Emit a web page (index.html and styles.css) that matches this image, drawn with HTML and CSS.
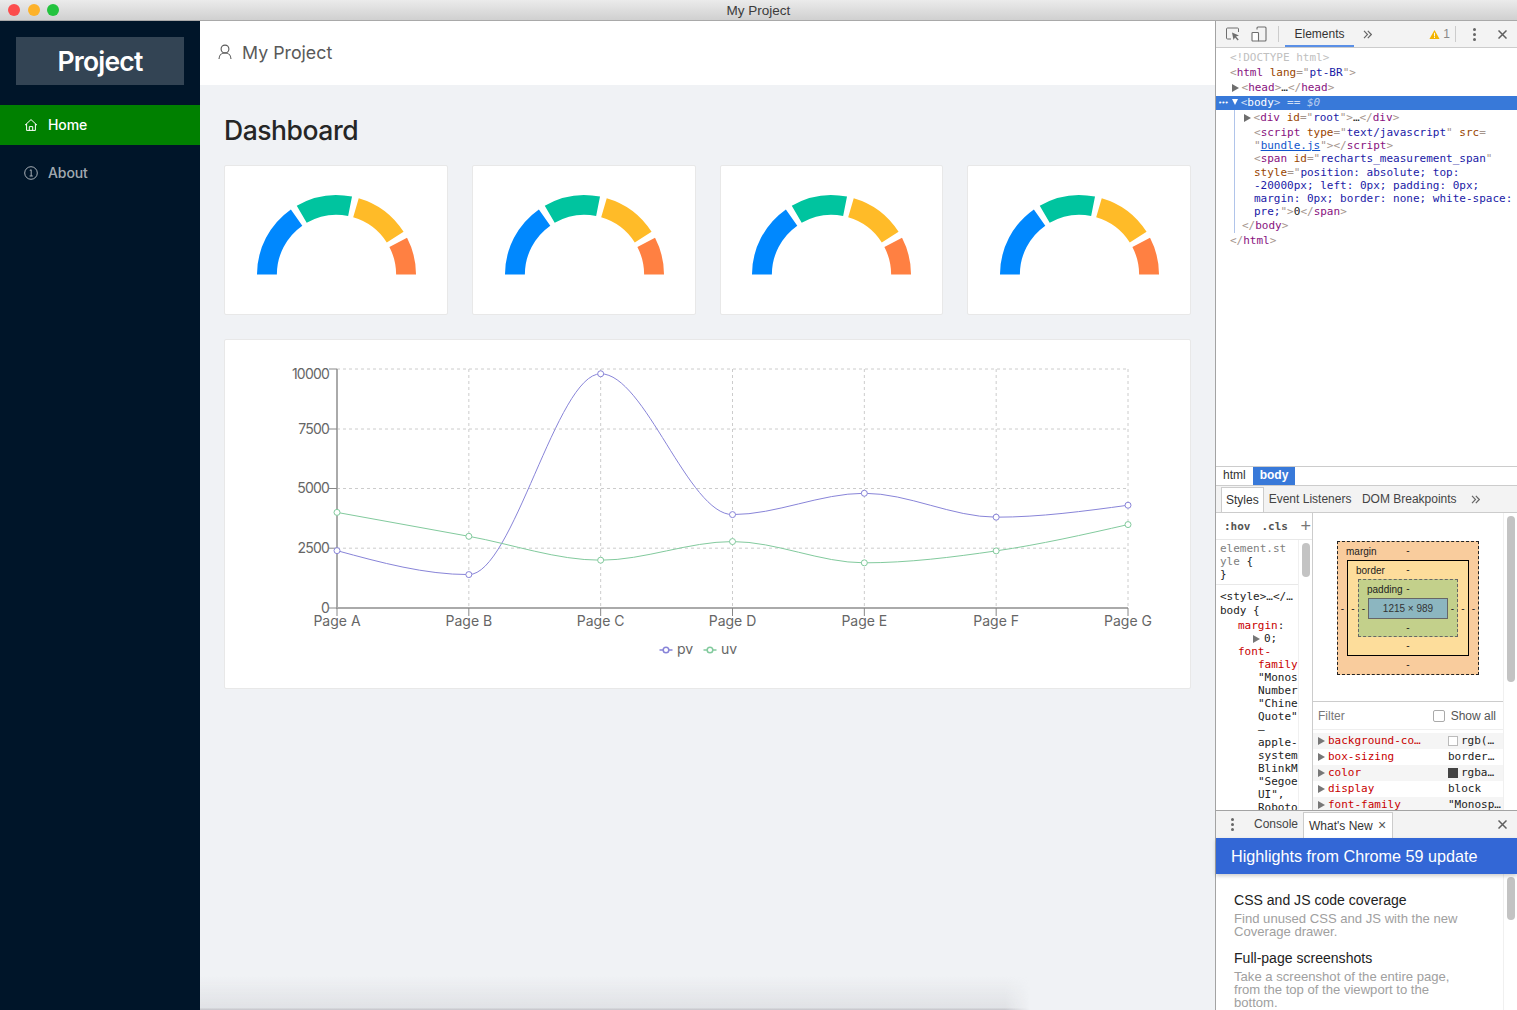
FILE: index.html
```html
<!DOCTYPE html>
<html lang="pt-BR">
<head>
<meta charset="utf-8">
<title>My Project</title>
<link rel="stylesheet" href="styles.css">
</head>
<body>
<div class="window">
  <header class="titlebar">
    <span class="light red"></span><span class="light amber"></span><span class="light green"></span>
    <span class="window-title">My Project</span>
  </header>
  <div class="workspace">
    <aside class="sidebar">
      <div class="logo">Project</div>
      <nav class="menu">
        <a class="menu-item active">
          <svg class="menu-icon" viewBox="0 0 14 14"><path d="M1 7.2 7 1.6l6 5.6M2.6 6v6.4h8.8V6M5.3 12.4V8.6h3.4v3.8" fill="none" stroke="currentColor" stroke-width="1"/></svg>
          <span class="menu-text">Home</span>
        </a>
        <a class="menu-item">
          <svg class="menu-icon" viewBox="0 0 14 14"><circle cx="7" cy="7" r="6.3" fill="none" stroke="currentColor" stroke-width="1"/><path d="M5.8 4.4 7.2 3.8v6M5.6 10h3.2" fill="none" stroke="currentColor" stroke-width="1"/></svg>
          <span class="menu-text">About</span>
        </a>
      </nav>
    </aside>
    <main class="main">
      <div class="topbar">
        <svg class="user-icon" viewBox="0 0 14 16"><circle cx="7" cy="5" r="3.9" fill="none" stroke="currentColor" stroke-width="1.1"/><path d="M1 15c0-3.600 2.500-6 6-6s6 2.400 6 6" fill="none" stroke="currentColor" stroke-width="1.1"/></svg>
        <span class="topbar-title">My Project</span>
      </div>
      <div class="content">
        <h1 class="page-title">Dashboard</h1>
        <div class="gauges">
          <div class="card gauge-card"><svg class="gauge" viewBox="-82 -82 164 84"><use href="#g"/></svg></div>
          <div class="card gauge-card"><svg class="gauge" viewBox="-82 -82 164 84"><use href="#g"/></svg></div>
          <div class="card gauge-card"><svg class="gauge" viewBox="-82 -82 164 84"><use href="#g"/></svg></div>
          <div class="card gauge-card"><svg class="gauge" viewBox="-82 -82 164 84"><use href="#g"/></svg></div>
        </div>
        <svg class="defs"><defs><g id="g">
          <path fill="#0088FE" d="M-80 0A80 80 0 0 1-45.89-65.53L-34.41-49.15A60 60 0 0 0-60 0Z"/>
          <path fill="#00C49F" d="M-40-69.28A80 80 0 0 1 15.61-78.46L11.71-58.85A60 60 0 0 0-30-51.96Z"/>
          <path fill="#FFBB28" d="M22.39-76.8A80 80 0 0 1 67.47-42.98L50.6-32.24A60 60 0 0 0 16.79-57.6Z"/>
          <path fill="#FF8042" d="M70.96-36.94A80 80 0 0 1 80 0L60 0A60 60 0 0 0 53.22-27.7Z"/>
        </g></defs></svg>
        <div class="card chart-card">
          <svg class="chart" viewBox="224 339 967 349">
            <g class="grid">
              <path d="M337 369H1128M337 429H1128M337 488.500H1128M337 548.200H1128"/>
              <path d="M468.830 369V608M600.670 369V608M732.500 369V608M864.330 369V608M996.170 369V608M1128 369V608"/>
            </g>
            <g class="axis">
              <path class="axis-line" d="M337 369V608H1128"/>
              <path d="M329 369H337M329 429H337M329 488.500H337M329 548.200H337M329 608H337M337 608V616M468.830 608V616M600.670 608V616M732.500 608V616M864.330 608V616M996.170 608V616M1128 608V616"/>
            </g>
            <g class="tick ytick">
              <text x="329" y="378.500">10000</text><text x="329" y="433.500">7500</text><text x="329" y="493">5000</text><text x="329" y="553">2500</text><text x="329" y="613">0</text>
            </g>
            <g class="tick xtick">
              <text x="337" y="626">Page A</text><text x="468.830" y="626">Page B</text><text x="600.670" y="626">Page C</text><text x="732.500" y="626">Page D</text><text x="864.330" y="626">Page E</text><text x="996.170" y="626">Page F</text><text x="1128" y="626">Page G</text>
            </g>
            <g class="series pv">
              <path d="M337 550.640C380.940 562.600 425 574.590 468.830 574.590C512.800 574.590 556.700 373.780 600.670 373.780C644.600 373.780 688.600 514.600 732.500 514.600C776.400 514.600 820.400 493.280 864.330 493.280C908.300 493.280 952.200 517.180 996.170 517.180C1040.100 517.180 1084 511.200 1128 505.230"/>
              <circle cx="337" cy="550.640" r="3"/><circle cx="468.830" cy="574.590" r="3"/><circle cx="600.670" cy="373.780" r="3"/><circle cx="732.500" cy="514.600" r="3"/><circle cx="864.330" cy="493.280" r="3"/><circle cx="996.170" cy="517.180" r="3"/><circle cx="1128" cy="505.230" r="3"/>
            </g>
            <g class="series uv">
              <path d="M337 512.400C380.940 520.370 425 528.330 468.830 536.300C512.800 544.270 556.700 560.200 600.670 560.200C644.600 560.200 688.600 541.560 732.500 541.560C776.400 541.560 820.400 562.830 864.330 562.830C908.300 562.830 952.200 557.250 996.170 550.880C1040.100 544.510 1084 534.550 1128 524.590"/>
              <circle cx="337" cy="512.400" r="3"/><circle cx="468.830" cy="536.300" r="3"/><circle cx="600.670" cy="560.200" r="3"/><circle cx="732.500" cy="541.560" r="3"/><circle cx="864.330" cy="562.830" r="3"/><circle cx="996.170" cy="550.880" r="3"/><circle cx="1128" cy="524.590" r="3"/>
            </g>
            <g class="series pv legend">
              <path d="M659.500 650H672.500"/><circle cx="666" cy="650" r="2.800"/>
            </g>
            <text class="legend-text" x="677" y="654">pv</text>
            <g class="series uv legend">
              <path d="M703.500 650H716.500"/><circle cx="710" cy="650" r="2.800"/>
            </g>
            <text class="legend-text" x="721" y="654">uv</text>
          </svg>
        </div>
      </div>
      <div class="page-shadow"></div>
    </main>
    <section class="devtools">
      <div class="dt-toolbar">
        <svg class="dt-icon" viewBox="0 0 16 16"><path d="M6 13H2.500A1 1 0 0 1 1.500 12V3A1 1 0 0 1 2.500 2H12.500A1 1 0 0 1 13.500 3V6" fill="none" stroke="#6e6e6e" stroke-width="1"/><path d="M7 6.500l7 3-3 1 2.700 3-1 1-2.700-3-1.500 2.500z" fill="#6e6e6e"/></svg>
        <svg class="dt-icon second" viewBox="0 0 16 16"><path d="M6 3.500V2A1 1 0 0 1 7 1H14A1 1 0 0 1 15 2V14A1 1 0 0 1 14 15H7" fill="none" stroke="#6e6e6e" stroke-width="1.100"/><rect x="1" y="6.500" width="6.500" height="8.500" rx=".8" fill="#fff" stroke="#6e6e6e" stroke-width="1.100"/></svg>
        <span class="dt-sep"></span>
        <span class="dt-tab">Elements</span>
        <svg class="dt-more" viewBox="0 0 9 9"><path d="M1 .8l3.500 3.700L1 8.200M4.800 .8l3.500 3.700-3.500 3.700" fill="none" stroke="#666" stroke-width="1.200"/></svg>
        <span class="dt-spacer"></span>
        <svg class="dt-warn" viewBox="0 0 12 11"><path d="M6 .5 11.500 10.500H.5z" fill="#f4b400"/><path d="M5.500 3.500h1v4h-1zM5.500 8h1v1.200h-1z" fill="#fff"/></svg>
        <span class="dt-count">1</span>
        <span class="dt-sep narrow"></span>
        <span class="kebab"><i></i><i></i><i></i></span>
        <svg class="dt-close" viewBox="0 0 9 9"><path d="M.5 .5l8 8M8.500 .5l-8 8" fill="none" stroke="#5f5f5f" stroke-width="1.500"/></svg>
      </div>
      <div class="dom">
        <div class="dom-line"></div>
        <div class="row i1 dim">&lt;!DOCTYPE html&gt;</div>
        <div class="row i1"><b>&lt;</b><em>html</em> <u>lang</u><b>="</b><s>pt-BR</s><b>"&gt;</b></div>
        <div class="row i2"><span class="arrow"></span><b>&lt;</b><em>head</em><b>&gt;</b>…<b>&lt;/</b><em>head</em><b>&gt;</b></div>
        <div class="row selected"><span class="dots">•••</span><span class="arrow open"></span>&lt;<strong>body</strong>&gt; == <i>$0</i></div>
        <div class="row i3"><span class="arrow"></span><b>&lt;</b><em>div</em> <u>id</u><b>="</b><s>root</s><b>"&gt;</b>…<b>&lt;/</b><em>div</em><b>&gt;</b></div>
        <div class="wrap i4"><b>&lt;</b><em>script</em> <u>type</u><b>="</b><s>text/javascript</s><b>"</b> <u>src</u><b>=</b><br><b>"</b><a class="dom-link">bundle.js</a><b>"&gt;&lt;/</b><em>script</em><b>&gt;</b></div>
        <div class="wrap i4"><b>&lt;</b><em>span</em> <u>id</u><b>="</b><s>recharts_measurement_span</s><b>"</b><br><u>style</u><b>="</b><s>position: absolute; top:</s><br><s>-20000px; left: 0px; padding: 0px;</s><br><s>margin: 0px; border: none; white-space:</s><br><s>pre;</s><b>"&gt;</b>0<b>&lt;/</b><em>span</em><b>&gt;</b></div>
        <div class="row i5"><b>&lt;/</b><em>body</em><b>&gt;</b></div>
        <div class="row i1"><b>&lt;/</b><em>html</em><b>&gt;</b></div>
      </div>
      <div class="crumbs"><span class="crumb">html</span><span class="crumb on">body</span></div>
      <div class="side-tabs">
        <span class="side-tab on">Styles</span><span class="side-tab">Event Listeners</span><span class="side-tab">DOM Breakpoints</span><svg class="dt-more small" viewBox="0 0 9 9"><path d="M1 .8l3.500 3.700L1 8.200M4.800 .8l3.500 3.700-3.500 3.700" fill="none" stroke="#666" stroke-width="1.200"/></svg>
      </div>
      <div class="side-panels">
        <div class="styles">
          <div class="styles-bar"><span>:hov</span><span>.cls</span><span class="plus">+</span></div>
          <div class="styles-scroll">
            <div class="styles-code">
              <div class="rule"><span class="gray">element.st<br>yle</span> {<br>}</div>
              <div class="rule last">
                <div class="rule-src">&lt;style&gt;…&lt;/…</div>
                body {<br>
                <div class="decl first"><span class="red-text">margin</span>:<br><span class="tri"></span>0;</div>
                <div class="decl"><span class="red-text">font-</span><br><span class="red-text ind">family</span><br><span class="ind">"Monos</span><br><span class="ind">Number</span><br><span class="ind">"Chine</span><br><span class="ind">Quote"</span><br><span class="ind">–</span><br><span class="ind">apple-</span><br><span class="ind">system</span><br><span class="ind">BlinkM</span><br><span class="ind">"Segoe</span><br><span class="ind">UI",</span><br><span class="ind">Roboto</span></div>
              </div>
            </div>
            <div class="track"><span class="thumb small-thumb"></span></div>
          </div>
        </div>
        <div class="computed">
          <div class="computed-inner">
            <div class="box-area">
              <div class="bm bm-margin">
                <span class="bm-label">margin</span><span class="bm-d top">-</span>
                <span class="bm-d side">-</span>
                <div class="bm bm-border">
                  <span class="bm-label">border</span><span class="bm-d top">-</span>
                  <span class="bm-d side">-</span>
                  <div class="bm bm-padding">
                    <span class="bm-label">padding</span><span class="bm-d top">-</span>
                    <span class="bm-d side">-</span>
                    <div class="bm-content">1215 × 989</div>
                    <span class="bm-d side">-</span>
                    <span class="bm-d bottom">-</span>
                  </div>
                  <span class="bm-d side">-</span>
                  <span class="bm-d bottom">-</span>
                </div>
                <span class="bm-d side">-</span>
                <span class="bm-d bottom">-</span>
              </div>
            </div>
            <div class="filter"><span class="filter-label">Filter</span><label class="showall"><span class="check"></span>Show all</label></div>
            <div class="props">
              <div class="prop"><span class="tri"></span><span class="prop-name">background-co…</span><span class="prop-val"><span class="swatch white"></span>rgb(…</span></div>
              <div class="prop"><span class="tri"></span><span class="prop-name">box-sizing</span><span class="prop-val">border…</span></div>
              <div class="prop"><span class="tri"></span><span class="prop-name">color</span><span class="prop-val"><span class="swatch dark"></span>rgba…</span></div>
              <div class="prop"><span class="tri"></span><span class="prop-name">display</span><span class="prop-val">block</span></div>
              <div class="prop"><span class="tri"></span><span class="prop-name">font-family</span><span class="prop-val">"Monosp…</span></div>
            </div>
          </div>
          <div class="track big"><span class="thumb computed-thumb"></span></div>
        </div>
      </div>
      <div class="drawer">
        <div class="drawer-tabs">
          <span class="kebab drawer-kebab"><i></i><i></i><i></i></span>
          <span class="drawer-tab">Console</span>
          <span class="drawer-tab on">What's New <span class="tab-x">×</span></span>
          <span class="dt-spacer"></span>
          <svg class="dt-close" viewBox="0 0 9 9"><path d="M.5 .5l8 8M8.500 .5l-8 8" fill="none" stroke="#5f5f5f" stroke-width="1.500"/></svg>
        </div>
        <div class="news-head">Highlights from Chrome 59 update</div>
        <div class="news-body">
          <div class="news-list">
            <h3>CSS and JS code coverage</h3>
            <p>Find unused CSS and JS with the new<br>Coverage drawer.</p>
            <h3>Full-page screenshots</h3>
            <p>Take a screenshot of the entire page,<br>from the top of the viewport to the<br>bottom.</p>
          </div>
          <div class="track big"><span class="thumb news-thumb"></span></div>
        </div>
      </div>
    </section>
  </div>
</div>
</body>
</html>
```
FILE: styles.css
```css
* { box-sizing: border-box; }
html, body { margin: 0; height: 100%; overflow: hidden; }
body { font-family: Inter, "Liberation Sans", sans-serif; background: #f0f2f5; }
.window { width: 1517px; height: 1010px; display: flex; flex-direction: column; }

.titlebar { height: 21px; flex: none; display: flex; align-items: center; gap: 7.5px; padding: 0 0 1px 8px; position: relative; background: linear-gradient(#ebebeb, #d0d0d0); border-bottom: 1px solid #a9a9a9; }
.light { width: 12px; height: 12px; border-radius: 50%; }
.red { background: #fc4d4d; }
.amber { background: #fdb22a; }
.green { background: #23c33e; }
.window-title { position: absolute; left: 0; right: 0; top: 3px; text-align: center; font: 13.500px/16px "Liberation Sans", sans-serif; color: #3b3b3b; }

.workspace { flex: 1; display: flex; min-height: 0; }

.sidebar { width: 200px; flex: none; background: #001529; padding-top: 16px; }
.logo { height: 48px; margin: 0 16px 20px; background: #334454; color: #fff; font-size: 26.500px; font-weight: 600; line-height: 48px; text-align: center; letter-spacing: -.8px; }
.menu { display: flex; flex-direction: column; gap: 8px; }
.menu-item { height: 40px; display: flex; align-items: center; gap: 10px; padding-left: 24px; font-size: 14px; font-weight: 500; color: rgba(255,255,255,.65); letter-spacing: -.1px; }
.menu-item.active { background: #008000; color: #fff; }
.menu-icon { width: 14px; height: 14px; flex: none; }
.menu-text { margin-top: -2px; }

.main { width: 1015px; flex: none; position: relative; display: flex; flex-direction: column; overflow: hidden; }
.topbar { height: 64px; flex: none; background: #fff; display: flex; align-items: center; gap: 10px; padding-left: 18px; color: #595959; }
.user-icon { width: 14px; height: 16px; margin-top: -2px; }
.topbar-title { font-size: 17.800px; margin-top: -1px; }
.content { flex: 1; padding: 25px 24px 0; }
.page-title { margin: 0 0 15px; font-size: 26.500px; line-height: 40px; font-weight: 500; color: #262626; letter-spacing: -.45px; }
.card { background: #fff; border: 1px solid #e8e8e8; border-radius: 2px; }
.gauges { display: grid; grid-template-columns: repeat(4, 1fr); gap: 24px; margin-bottom: 24px; }
.gauge-card { height: 150px; display: flex; justify-content: center; padding: 27px 0 0 1px; }
.gauge { width: 163px; height: 83.500px; display: block; }
.defs { width: 0; height: 0; position: absolute; }
.chart-card { height: 350px; overflow: hidden; }
.chart { display: block; width: 967px; height: 349px; margin: -1px; }
.grid path { fill: none; stroke: #ccc; stroke-dasharray: 3 3; stroke-width: 1; }
.axis path { fill: none; stroke: #888; stroke-width: 1; }
.axis .axis-line { stroke: #aaa; stroke-width: 2; }
.tick text { font-size: 14px; fill: #666; }
.ytick text { text-anchor: end; letter-spacing: -.8px; }
.xtick text { text-anchor: middle; }
.series path { fill: none; stroke-width: 1; }
.series circle { fill: #fff; stroke-width: 1; }
.pv path, .pv circle { stroke: #8884d8; }
.uv path, .uv circle { stroke: #82ca9d; }
.legend path { stroke-width: 1.5; }
.legend circle { stroke-width: 1.5; }
.legend-text { font-size: 14px; fill: #666; }
.page-shadow { position: absolute; left: 0; bottom: 0; width: 830px; height: 34px; background: linear-gradient(rgba(190,191,195,0), rgba(190,191,195,.3) 94%, #c9c9ce 97%); -webkit-mask-image: linear-gradient(90deg, #000 97%, transparent); mask-image: linear-gradient(90deg, #000 97%, transparent); }

.devtools { flex: 1; min-width: 0; display: flex; flex-direction: column; background: #fff; border-left: 1px solid #a3a3a3; font: 12px "Liberation Sans", sans-serif; color: #333; }
.dt-toolbar { height: 27px; flex: none; display: flex; align-items: center; padding-left: 9px; background: #f3f3f3; border-bottom: 1px solid #ccc; position: relative; }
.dt-icon { width: 16px; height: 16px; flex: none; }
.dt-icon.second { margin-left: 10px; }
.dt-sep { width: 1px; height: 16px; background: #ccc; margin: 0 6px 0 11px; flex: none; }
.dt-sep.narrow { margin: 0 17px 0 5px; }
.dt-tab { height: 26px; padding: 0 9.500px; line-height: 26px; color: #333; border-bottom: 2px solid #5a8fe6; }
.dt-more { width: 9px; height: 9px; margin-left: 9px; flex: none; }
.dt-spacer { flex: 1; }
.dt-warn { width: 11px; height: 11px; flex: none; }
.dt-count { margin-left: 3px; color: #888; }
.kebab { display: flex; flex-direction: column; gap: 2px; width: 3px; flex: none; }
.kebab i { width: 3px; height: 3px; border-radius: 50%; background: #666; }
.dt-close { width: 9px; height: 9px; margin: 0 10px 0 22px; flex: none; }

.dom { height: 418px; flex: none; padding-top: 2px; font: 11px "DejaVu Sans Mono", monospace; color: #222; position: relative; overflow: hidden; }
.dom-line { position: absolute; left: 18px; top: 62px; width: 1px; height: 123px; background: #b0c4ea; }
.row { line-height: 15px; height: 15px; white-space: pre; }
.wrap { line-height: 13.200px; padding-top: .5px; white-space: pre; }
.row b, .wrap b { font-weight: 400; color: #a5958d; }
.row em, .wrap em { font-style: normal; color: #881280; }
.row u, .wrap u { text-decoration: none; color: #994500; }
.row s, .wrap s { text-decoration: none; color: #1a1aa6; }
.dom-link { color: #1155cc; text-decoration: underline; }
.dim { color: #c0c0c0; }
.i1 { padding-left: 14px; }
.i2 { padding-left: 16px; }
.i3 { padding-left: 28px; }
.i4 { padding-left: 38px; }
.i5 { padding-left: 26px; }
.arrow { display: inline-block; width: 0; height: 0; margin-right: 2.500px; border-left: 7px solid #6e6e6e; border-top: 4px solid transparent; border-bottom: 4px solid transparent; vertical-align: -1px; }
.arrow.open { border-left: 3.500px solid transparent; border-right: 3.500px solid transparent; border-top: 6px solid #fff; border-bottom: 0; margin-right: 3px; vertical-align: 1px; }
.selected { background: #3879d9; color: #cfdef5; padding-left: 2px; height: 14px; line-height: 14px; margin-top: 1px; }
.selected strong { font-weight: 400; color: #fff; }
.selected i { color: #b8cef0; }
.dots { font-size: 7px; letter-spacing: -1px; margin-right: 4px; color: #fff; vertical-align: 1px; }

.crumbs { height: 20px; flex: none; display: flex; border-top: 1px solid #ccc; border-bottom: 1px solid #ccc; line-height: 17px; }
.crumb { padding: 0 7px; color: #333; }
.crumb.on { background: #3879d9; color: #fff; font-weight: 700; }
.side-tabs { height: 27px; flex: none; display: flex; align-items: flex-end; background: #f3f3f3; border-bottom: 1px solid #ccc; padding-left: 5px; }
.side-tab { height: 25px; padding: 0 5.500px 0 5px; line-height: 25px; color: #444; white-space: nowrap; }
.side-tab.on { background: #fff; border: 1px solid #ccc; border-bottom: 0; color: #333; line-height: 24px; padding: 0 4px; }
.dt-more.small { margin-left: 9px; align-self: center; }

.side-panels { flex: 1; min-height: 0; display: flex; overflow: hidden; }
.styles { width: 97px; flex: none; display: flex; flex-direction: column; border-right: 1px solid #ccc; font: 11px "DejaVu Sans Mono", monospace; color: #222; }
.styles-bar { height: 27px; flex: none; display: flex; align-items: center; gap: 11px; padding-left: 8px; font-weight: 700; color: #555; border-bottom: 1px solid #e8e8e8; position: relative; }
.plus { position: absolute; right: 1px; top: 3px; font: 400 18px/20px "Liberation Sans", sans-serif; color: #777; }
.styles-scroll { flex: 1; display: flex; min-height: 0; overflow: hidden; }
.styles-code { flex: 1; min-width: 0; line-height: 13px; overflow: hidden; }
.rule { padding: 2px 0 3px 4px; border-bottom: 1px solid #e8e8e8; white-space: nowrap; overflow: hidden; }
.rule.last { border: 0; padding-top: 5px; }
.rule-src { margin-bottom: 1px; }
.gray { color: #808080; }
.decl { padding-left: 18px; }
.decl.first { margin-top: 2px; }
.decl .tri { margin-left: 15px; margin-right: 4px; vertical-align: -1px; }
.ind { margin-left: 20px; }
.red-text { color: #c80000; }
.tri { display: inline-block; flex: none; width: 0; height: 0; border-left: 7px solid #777; border-top: 4px solid transparent; border-bottom: 4px solid transparent; }
.track { width: 14px; flex: none; background: #fff; padding: 3px 3px 0 3px; border-left: 1px solid #f0f0f0; }
.thumb { display: block; width: 8px; border-radius: 4px; background: #c3c3c3; }
.small-thumb { height: 34px; }
.computed-thumb { height: 166px; }
.news-thumb { height: 43px; }
.computed { flex: 1; min-width: 0; display: flex; }
.computed-inner { flex: 1; min-width: 0; display: flex; flex-direction: column; overflow: hidden; }
.box-area { height: 189px; flex: none; padding: 28px 0 0 24px; border-bottom: 1px solid #ccc; font-size: 10px; color: #222; }
.bm { display: grid; position: relative; border: 1px dashed #222; grid-template-columns: 9px 1fr 9px; text-align: center; line-height: 17px; }
.bm-margin { width: 142px; height: 134px; background: #f9cc9d; grid-template-rows: 18px 1fr 19px; }
.bm-border { height: 96px; background: #fddd9b; border: 1px solid #000; grid-template-rows: 18px 1fr 18px; grid-template-columns: 10px 1fr 10px; }
.bm-padding { height: 58px; background: #c3d08b; border: 1px dashed #666; grid-template-rows: 18px 1fr 18px; grid-template-columns: 9px 1fr 9px; }
.bm-content { background: #8cb6c0; border: 1px solid #666; line-height: 19px; white-space: nowrap; color: #333; }
.bm-label { position: absolute; left: 8px; top: 1px; }
.bm-d { line-height: 17px; }
.bm-d.top, .bm-d.bottom { grid-column: 1 / -1; }
.bm-d.side { align-self: center; }
.filter { height: 28px; flex: none; display: flex; align-items: center; justify-content: space-between; padding: 0 7px 0 5px; border-bottom: 1px solid #eee; color: #777; }
.showall { display: flex; align-items: center; color: #555; }
.check { width: 12px; height: 12px; border: 1px solid #aaa; border-radius: 2px; background: #fff; margin-right: 6px; }
.props { font: 11px "DejaVu Sans Mono", monospace; padding-top: 3px; }
.prop { height: 16px; line-height: 16px; display: flex; align-items: center; padding-left: 5px; color: #222; white-space: nowrap; }
.prop:nth-child(odd) { background: #f5f5f5; }
.prop .tri { margin-right: 3px; }
.prop-name { width: 120px; color: #c80000; }
.prop-val { flex: 1; display: flex; align-items: center; }
.swatch { width: 10px; height: 10px; margin-right: 3px; border: 1px solid #bbb; flex: none; }
.swatch.white { background: #fff; }
.swatch.dark { background: #444; border-color: #444; }

.drawer { height: 200px; flex: none; display: flex; flex-direction: column; border-top: 1px solid #a3a3a3; }
.drawer-tabs { height: 27px; flex: none; display: flex; align-items: flex-end; background: #f3f3f3; }
.drawer-kebab { align-self: center; margin: 0 15px 0 15px; }
.drawer-tab { height: 26px; padding: 0 5px; line-height: 25px; color: #444; white-space: nowrap; }
.drawer-tab.on { background: #fff; border: 1px solid #ccc; border-bottom: 0; padding: 0 4px 0 5px; width: 90px; color: #333; }
.tab-x { font-size: 14px; margin-left: 2px; color: #555; }
.drawer-tabs .dt-close { align-self: center; }
.news-head { height: 36px; flex: none; background: #3367d6; color: #fff; font-size: 16.200px; line-height: 36px; padding-left: 15px; box-shadow: 0 2px 4px rgba(0,0,0,.2); position: relative; }
.news-body { flex: 1; min-height: 0; display: flex; overflow: hidden; }
.news-list { flex: 1; min-width: 0; padding: 18px 0 0 18px; }
.news-list h3 { margin: 0; font-size: 14.050px; font-weight: 400; line-height: 16px; color: #222; }
.news-list p { margin: 4px 0 12px; font-size: 13.100px; line-height: 13px; color: #a0a0a0; }
```
